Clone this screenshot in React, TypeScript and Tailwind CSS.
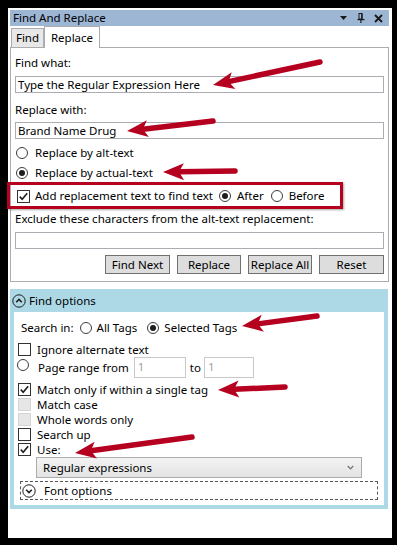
import React from "react";

const RED = "#b5001f";

function arrowShape(x1: number, y1: number, x2: number, y2: number) {
  const L = 21, W = 17, N = 5;
  const dx = x2 - x1, dy = y2 - y1;
  const len = Math.hypot(dx, dy);
  const ux = dx / len, uy = dy / len;
  const px = -uy, py = ux;
  const bx = x2 - ux * L, by = y2 - uy * L;
  const nx = x2 - ux * (L - N), ny = y2 - uy * (L - N);
  const head = `${x2},${y2} ${bx + (px * W) / 2},${by + (py * W) / 2} ${nx},${ny} ${bx - (px * W) / 2},${by - (py * W) / 2}`;
  return { x1, y1, nx, ny, head };
}

const ARROWS: [number, number, number, number][] = [
  [320, 62, 213, 85],
  [213, 121, 127, 131],
  [235, 171, 163, 172],
  [317, 316, 242, 326],
  [285, 387, 218, 390],
  [192, 437, 75, 453],
];

function Radio({ checked }: { checked?: boolean }) {
  return (
    <span className="w-[12px] h-[12px] rounded-full border border-[#3c3c3c] bg-white flex items-center justify-center shrink-0">
      {checked && <span className="w-[6px] h-[6px] rounded-full bg-[#1e1e1e]" />}
    </span>
  );
}

function Check({ checked, disabled }: { checked?: boolean; disabled?: boolean }) {
  return (
    <span
      className={
        disabled
          ? "w-[13px] h-[13px] border border-[#d4d4d4] bg-[#e6e6e6] shrink-0"
          : "w-[13px] h-[13px] border border-[#333333] bg-white shrink-0 flex items-center justify-center"
      }
    >
      {checked && (
        <svg width="11" height="11" viewBox="0 0 11 11">
          <path d="M1.8 5.6 L4.2 8.2 L9.2 2.2" fill="none" stroke="#1e1e1e" strokeWidth="1.6" />
        </svg>
      )}
    </span>
  );
}

function CircleChevron({ up }: { up?: boolean }) {
  return (
    <svg width="14" height="14" viewBox="0 0 14 14" className="shrink-0">
      <circle cx="7" cy="7" r="6.2" fill="none" stroke="#1e1e1e" strokeWidth="1" />
      {up ? (
        <path d="M4.2 8.3 L7 5.5 L9.8 8.3" fill="none" stroke="#1e1e1e" strokeWidth="1.6" />
      ) : (
        <path d="M4.2 5.7 L7 8.5 L9.8 5.7" fill="none" stroke="#1e1e1e" strokeWidth="1.6" />
      )}
    </svg>
  );
}

function Btn({ label, w }: { label: string; w: string }) {
  return (
    <div className={`${w} h-[19px] border border-[#707070] bg-[#dddddd] flex items-center justify-center`}>
      {label}
    </div>
  );
}

export default function App() {
  return (
    <div className="relative w-[397px] h-[545px] bg-black overflow-hidden pt-[8px] pl-[8px] font-['Noto_Sans',sans-serif] text-[11.5px] text-black leading-none">
      <div className="w-[384px] h-[530px] bg-white pl-[2px] pt-[2px] pr-[3px] flex flex-col">
        {/* Title bar */}
        <div className="h-[16px] bg-[#9db6d4] flex items-center justify-between pl-[3px] pr-[6px]">
          <span>Find And Replace</span>
          <div className="flex items-center gap-[9px]">
            <svg width="8" height="5" viewBox="0 0 8 5">
              <polygon points="0,0 7,0 3.5,4" fill="#1a1a1a" />
            </svg>
            <svg width="8" height="10" viewBox="0 0 8 10">
              <rect x="2" y="0.5" width="3" height="5.5" fill="none" stroke="#1a1a1a" strokeWidth="1" />
              <rect x="4.2" y="0.5" width="1.3" height="5.5" fill="#1a1a1a" />
              <rect x="0.5" y="6" width="7" height="1.2" fill="#1a1a1a" />
              <rect x="3.3" y="7" width="1.2" height="3" fill="#1a1a1a" />
            </svg>
            <svg width="9" height="9" viewBox="0 0 9 9">
              <path d="M1 1 L8 8 M8 1 L1 8" stroke="#1a1a1a" strokeWidth="1.9" />
            </svg>
          </div>
        </div>

        {/* Tabs */}
        <div className="h-[21px] flex items-end pl-[1px]">
          <div className="h-[19px] w-[33px] border border-b-0 border-[#acacac] bg-[#e8e8e8] flex items-center justify-center">
            Find
          </div>
          <div className="relative z-10 -mb-px h-[22px] w-[56px] border border-b-0 border-[#acacac] bg-white flex items-center justify-center">
            Replace
          </div>
        </div>

        {/* Replace panel */}
        <div className="h-[235px] border border-[#acacac] px-[4px] flex flex-col">
          <div className="mt-[7px] h-[16px] flex items-center">Find what:</div>
          <div className="mt-[5px] h-[17px] border border-[#abadb3] flex items-center pl-[2px]">
            Type the Regular Expression Here
          </div>
          <div className="mt-[9px] h-[16px] flex items-center">Replace with:</div>
          <div className="mt-[4px] h-[17px] border border-[#abadb3] flex items-center pl-[2px]">
            Brand Name Drug
          </div>
          <div className="mt-[6px] h-[16px] flex items-center gap-[7px] pl-[1px]">
            <Radio />
            <span>Replace by alt-text</span>
          </div>
          <div className="mt-[4px] h-[16px] flex items-center gap-[7px] pl-[1px]">
            <Radio checked />
            <span>Replace by actual-text</span>
          </div>
          <div className="mt-[7px] h-[16px] flex items-center pl-[2px]">
            <Check checked />
            <span className="ml-[5px]">Add replacement text to find text</span>
            <span className="ml-[6px]">
              <Radio checked />
            </span>
            <span className="ml-[6px]">After</span>
            <span className="ml-[7px]">
              <Radio />
            </span>
            <span className="ml-[6px]">Before</span>
          </div>
          <div className="mt-[7px] h-[16px] flex items-center">
            Exclude these characters from the alt-text replacement:
          </div>
          <div className="mt-[5px] h-[17px] border border-[#abadb3]" />
          <div className="mt-[6px] flex justify-end gap-[7px]">
            <Btn label="Find Next" w="w-[65px]" />
            <Btn label="Replace" w="w-[64px]" />
            <Btn label="Replace All" w="w-[64px]" />
            <Btn label="Reset" w="w-[65px]" />
          </div>
        </div>

        {/* Find options */}
        <div className="mt-[7px] w-[378px] flex flex-col">
          <div className="h-[23px] bg-[#add8e6] flex items-center pl-[2px] gap-[3px]">
            <CircleChevron up />
            <span>Find options</span>
          </div>
          <div className="h-[197px] border-x-[4px] border-b-[4px] border-[#add8e6] bg-white flex flex-col">
            <div className="mt-[8px] h-[16px] flex items-center pl-[7px]">
              <span>Search in:</span>
              <span className="ml-[6px]">
                <Radio />
              </span>
              <span className="ml-[5px]">All Tags</span>
              <span className="ml-[10px]">
                <Radio checked />
              </span>
              <span className="ml-[5px]">Selected Tags</span>
            </div>
            <div className="mt-[6px] h-[15px] flex items-center pl-[4px] gap-[6px]">
              <Check />
              <span>Ignore alternate text</span>
            </div>
            <div className="h-[21px] flex items-center pl-[3px]">
              <span className="self-start mt-[2px]">
                <Radio />
              </span>
              <span className="ml-[9px]">Page range from</span>
              <div className="ml-[5px] w-[52px] h-[21px] border border-[#c9c9c9] text-[#a0a0a0] pl-[3px] pt-[3px]">1</div>
              <span className="ml-[4px]">to</span>
              <div className="ml-[3px] w-[50px] h-[21px] border border-[#c9c9c9] text-[#a0a0a0] pl-[3px] pt-[3px]">1</div>
            </div>
            <div className="mt-[4px] h-[15px] flex items-center pl-[4px] gap-[6px]">
              <Check checked />
              <span>Match only if within a single tag</span>
            </div>
            <div className="h-[15px] flex items-center pl-[4px] gap-[6px]">
              <Check disabled />
              <span>Match case</span>
            </div>
            <div className="h-[15px] flex items-center pl-[4px] gap-[6px]">
              <Check disabled />
              <span>Whole words only</span>
            </div>
            <div className="h-[15px] flex items-center pl-[4px] gap-[6px]">
              <Check />
              <span>Search up</span>
            </div>
            <div className="h-[15px] flex items-center pl-[4px] gap-[6px]">
              <Check checked />
              <span>Use:</span>
            </div>
            <div className="ml-[22px] w-[326px] h-[21px] border border-[#acacac] bg-linear-to-b from-[#f3f3f3] to-[#e3e3e3] flex items-center justify-between pl-[6px] pr-[7px]">
              <span>Regular expressions</span>
              <svg width="7" height="5" viewBox="0 0 7 5">
                <path d="M0.8 1 L3.5 3.8 L6.2 1" fill="none" stroke="#707070" strokeWidth="1.2" />
              </svg>
            </div>
            <div className="mt-[3px] ml-[6px] w-[358px] h-[19px] border border-dashed border-[#555555] flex items-center pl-[1px] gap-[8px]">
              <CircleChevron />
              <span>Font options</span>
            </div>
          </div>
        </div>
      </div>

      {/* Annotation overlay */}
      <div className="absolute left-[7px] top-[182px] w-[336px] h-[27px] border-[3px] border-[#b5001f] shadow-[1px_1px_2px_rgba(0,0,0,0.35)] pointer-events-none" />
      <svg className="absolute left-0 top-0 pointer-events-none" width="397" height="545" viewBox="0 0 397 545">
        {ARROWS.map(([a, b, c, d], i) => {
          const s = arrowShape(a, b, c, d);
          return (
            <g key={i}>
              <line x1={s.x1} y1={s.y1} x2={s.nx} y2={s.ny} stroke={RED} strokeWidth="5.5" strokeLinecap="round" />
              <polygon points={s.head} fill={RED} />
            </g>
          );
        })}
      </svg>
    </div>
  );
}
